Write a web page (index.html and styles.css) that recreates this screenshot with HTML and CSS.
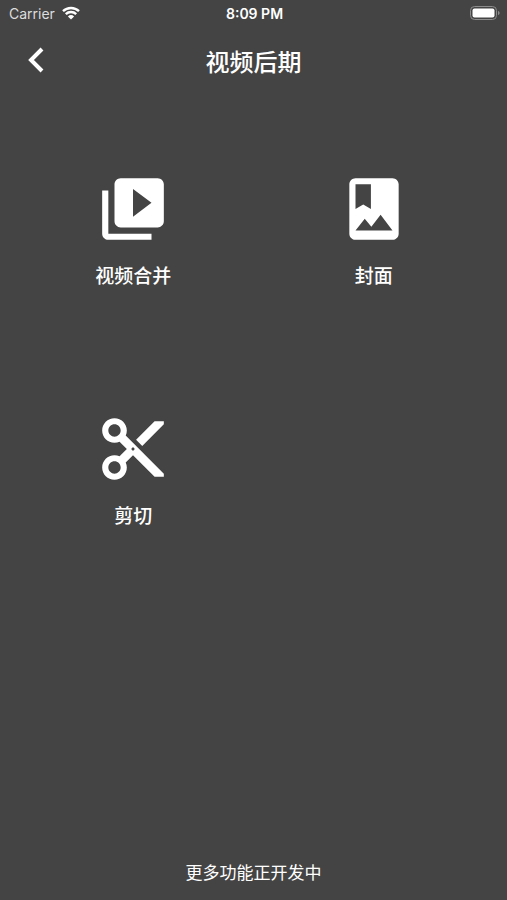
FILE: index.html
```html
<!DOCTYPE html>
<html lang="zh-CN">
<head>
    <meta charset="UTF-8">
    <meta name="viewport" content="width=device-width, initial-scale=1">
    <title>视频后期</title>
    <link rel="stylesheet" href="styles.css">
</head>
<body>
    <div class="status-bar">
        <div class="carrier">
            <span>Carrier</span>
            <svg class="wifi" viewBox="0 0 18 14" aria-hidden="true">
                <path d="M1 5.2a11.5 11.5 0 0 1 16 0M3.8 8.2a7.4 7.4 0 0 1 10.4 0" fill="none" stroke="#fff" stroke-width="2.4"/>
                <path d="M9 13.6L5.9 10.4a4.5 4.5 0 0 1 6.2 0z" fill="#fff"/>
            </svg>
        </div>
        <span class="time">8:09 PM</span>
        <svg class="battery" viewBox="0 0 30 14" aria-hidden="true">
            <rect x="0.5" y="0.5" width="26" height="13" rx="4" fill="none" stroke="#8c8c8c"/>
            <rect x="2.5" y="2.5" width="22" height="9" rx="2" fill="#fff"/>
            <path d="M28 5v4c1-.4 1.6-1.1 1.6-2S29 5.4 28 5z" fill="#8c8c8c"/>
        </svg>
    </div>

    <header class="nav">
        <button class="back" type="button" aria-label="返回">
            <svg viewBox="0 0 16 26" aria-hidden="true">
                <path d="M14 2L3 13l11 11" fill="none" stroke="#fff" stroke-width="4"/>
            </svg>
        </button>
        <h1>视频后期</h1>
    </header>

    <main class="menu">
        <button class="item" type="button">
            <svg class="icon" viewBox="0 0 24 24" aria-hidden="true">
                <path d="M4 6H2v14c0 1.1.9 2 2 2h14v-2H4V6zm16-4H8c-1.1 0-2 .9-2 2v12c0 1.1.9 2 2 2h12c1.1 0 2-.9 2-2V4c0-1.1-.9-2-2-2zm-8 12.5v-9l6 4.5-6 4.5z"/>
            </svg>
            <span>视频合并</span>
        </button>
        <button class="item" type="button">
            <svg class="icon" viewBox="0 0 24 24" aria-hidden="true">
                <path d="M18 2H6c-1.1 0-2 .9-2 2v16c0 1.1.9 2 2 2h12c1.1 0 2-.9 2-2V4c0-1.1-.9-2-2-2zM6 4h5v8l-2.5-1.5L6 12V4zm0 15l3-3.86 2.14 2.58 3-3.86L18 19H6z"/>
            </svg>
            <span>封面</span>
        </button>
        <button class="item" type="button">
            <svg class="icon" viewBox="0 0 24 24" aria-hidden="true">
                <path d="M9.64 7.64c.23-.5.36-1.05.36-1.64 0-2.21-1.79-4-4-4S2 3.79 2 6s1.79 4 4 4c.59 0 1.14-.13 1.64-.36L10 12l-2.36 2.36C7.14 14.13 6.59 14 6 14c-2.21 0-4 1.79-4 4s1.79 4 4 4 4-1.79 4-4c0-.59-.13-1.14-.36-1.64L12 14l7 7h3v-1L9.64 7.64zM6 8c-1.1 0-2-.89-2-2s.9-2 2-2 2 .89 2 2-.9 2-2 2zm0 12c-1.1 0-2-.89-2-2s.9-2 2-2 2 .89 2 2-.9 2-2 2zm6-7.5c-.28 0-.5-.22-.5-.5s.22-.5.5-.5.5.22.5.5-.22.5-.5.5zM19 3l-6 6 2 2 7-7V3z"/>
            </svg>
            <span>剪切</span>
        </button>
    </main>

    <footer class="tip">更多功能正开发中</footer>
</body>
</html>
```

FILE: styles.css
```css
* {
    box-sizing: border-box;
}

body {
    margin: 0;
    min-height: 100vh;
    display: flex;
    flex-direction: column;
    background-color: #444444;
    color: white;
    font-family: Inter, "Noto Sans CJK SC", sans-serif;
}

button {
    padding: 0;
    border: none;
    background: none;
    color: inherit;
    font-family: inherit;
    cursor: pointer;
}

svg {
    display: block;
}

.status-bar {
    display: grid;
    grid-template-columns: 1fr auto 1fr;
    align-items: center;
    height: 26px;
    padding: 0 7px 0 9px;
    font-size: 14px;
}

.carrier {
    display: flex;
    align-items: center;
    gap: 7px;
    color: #dddddd;
}

.wifi {
    width: 18px;
    height: 14px;
}

.time {
    font-weight: 600;
}

.battery {
    justify-self: end;
    width: 30px;
    height: 14px;
}

.nav {
    display: grid;
    grid-template-columns: 56px 1fr 56px;
    align-items: center;
    height: 68px;
}

.back {
    display: flex;
    align-items: center;
    justify-content: flex-end;
    height: 100%;
    padding-right: 12px;
}

.back svg {
    width: 16px;
    height: 26px;
}

.nav h1 {
    margin: 0;
    text-align: center;
    font-size: 24px;
    font-weight: 500;
}

.menu {
    flex: 1;
    display: grid;
    grid-template-columns: 1fr 1fr;
    align-content: start;
    padding: 17px 13px;
}

.item {
    aspect-ratio: 1;
    display: flex;
    flex-direction: column;
    align-items: center;
    justify-content: center;
    gap: 17px;
    font-size: 19px;
    font-weight: 500;
    line-height: 28px;
}

.icon {
    width: 74px;
    height: 74px;
    fill: white;
}

.tip {
    padding-bottom: 14px;
    text-align: center;
    font-size: 17px;
    line-height: 26px;
}
```
